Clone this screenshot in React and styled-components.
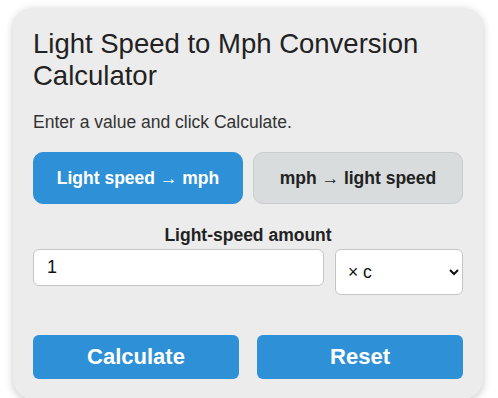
import { useState } from 'react'
import styled, { createGlobalStyle } from 'styled-components'

const Color = {
  Blue: '#2e91d7',
  Card: '#ebeceb',
  Ink: '#222222',
  Toggle: '#d8dcdc',
  Line: '#c9cdcd',
  Field: '#c4c6c6',
  White: '#ffffff'
}

const GlobalStyle = createGlobalStyle`
  * {
    box-sizing: border-box;
  }

  body {
    margin: 0;
    background: ${Color.White};
    font-family: 'Liberation Sans', Arial, sans-serif;
    color: ${Color.Ink};
  }
`

const Page = styled.main`
  padding: 8px 15px 0 13px;
`

const Card = styled.section`
  width: 470px;
  padding: 20px;
  border-radius: 20px;
  background: ${Color.Card};
  box-shadow: 0 2px 8px rgba(0, 0, 0, 0.22);
`

const Title = styled.h1`
  margin: 0 0 20px;
  font-size: 27.5px;
  font-weight: normal;
  line-height: 32px;
`

const Intro = styled.p`
  margin: 0 0 20px;
  font-size: 17.5px;
  line-height: 20px;
  color: #333;
`

const ModeBar = styled.div`
  display: grid;
  grid-template-columns: 1fr 1fr;
  gap: 10px;
  margin-bottom: 21px;
`

const ModeButton = styled.button`
  height: 52px;
  border-radius: 10px;
  border: 1px solid ${({ $active }) => ($active ? Color.Blue : Color.Line)};
  background: ${({ $active }) => ($active ? Color.Blue : Color.Toggle)};
  color: ${({ $active }) => ($active ? Color.White : Color.Ink)};
  font-family: inherit;
  font-size: 17.5px;
  font-weight: bold;
  cursor: pointer;
`

const FieldLabel = styled.label`
  display: block;
  margin-bottom: 4px;
  font-size: 17.5px;
  font-weight: bold;
  line-height: 20px;
  text-align: center;
`

const FieldRow = styled.div`
  display: flex;
  align-items: flex-start;
  gap: 11px;
  margin-bottom: 40px;
`

const AmountInput = styled.input`
  flex: 1;
  min-width: 0;
  height: 37px;
  padding: 8px 13px;
  border: 1px solid ${Color.Field};
  border-radius: 6px;
  background: ${Color.White};
  font-family: inherit;
  font-size: 18px;
  color: #111;
`

const UnitSelect = styled.select`
  width: 128px;
  height: 46px;
  padding: 0 8px;
  border: 1px solid ${Color.Field};
  border-radius: 6px;
  background: ${Color.White};
  font-family: inherit;
  font-size: 17.5px;
  color: #111;
`

const Actions = styled.div`
  display: grid;
  grid-template-columns: 1fr 1fr;
  gap: 18px;
`

const ActionButton = styled.button`
  height: 44px;
  border: none;
  border-radius: 6px;
  background: ${Color.Blue};
  color: ${Color.White};
  font-family: inherit;
  font-size: 22px;
  font-weight: bold;
  cursor: pointer;
`

function App() {
  const [mode, setMode] = useState('toMph')
  const [amount, setAmount] = useState('1')

  return (
    <Page>
      <GlobalStyle />
      <Card>
        <Title>Light Speed to Mph Conversion Calculator</Title>
        <Intro>Enter a value and click Calculate.</Intro>
        <ModeBar>
          <ModeButton $active={mode === 'toMph'} onClick={() => setMode('toMph')}>
            Light speed → mph
          </ModeButton>
          <ModeButton $active={mode === 'toLight'} onClick={() => setMode('toLight')}>
            mph → light speed
          </ModeButton>
        </ModeBar>
        <FieldLabel htmlFor="amount">Light-speed amount</FieldLabel>
        <FieldRow>
          <AmountInput id="amount" value={amount} onChange={(e) => setAmount(e.target.value)} />
          <UnitSelect defaultValue="c">
            <option value="c">× c</option>
            <option value="pct">% of c</option>
          </UnitSelect>
        </FieldRow>
        <Actions>
          <ActionButton>Calculate</ActionButton>
          <ActionButton onClick={() => setAmount('1')}>Reset</ActionButton>
        </Actions>
      </Card>
    </Page>
  )
}

export default App
